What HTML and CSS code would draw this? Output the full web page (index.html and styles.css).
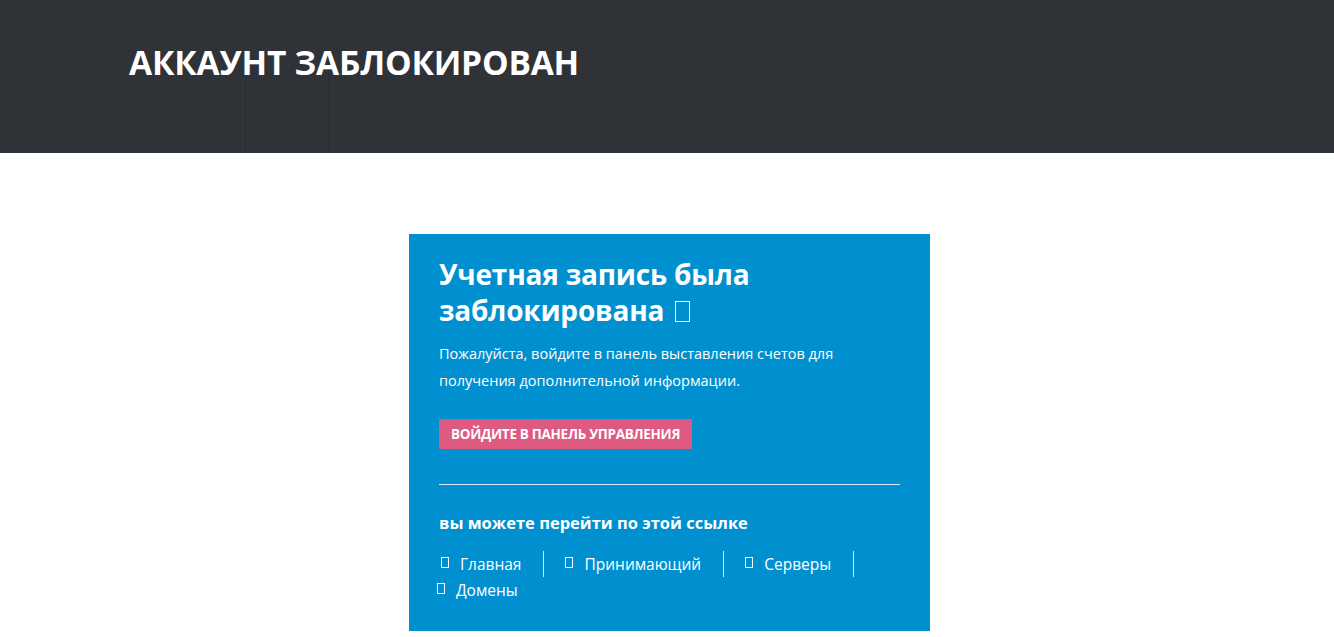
FILE: index.html
```html
<!DOCTYPE html>
<html lang="ru">
<head>
<meta charset="utf-8">
<title>Аккаунт заблокирован</title>
<link rel="stylesheet" href="styles.css">
</head>
<body>
<header class="hero">
  <div class="hero-inner">
    <h1 class="hero-title">АККАУНТ ЗАБЛОКИРОВАН</h1>
    <div class="hero-deco"></div>
  </div>
</header>
<main class="content">
  <section class="card">
    <h2 class="card-title">Учетная запись была заблокирована <span class="tofu tofu-lg"></span></h2>
    <p class="card-text">Пожалуйста, войдите в панель выставления счетов для получения дополнительной информации.</p>
    <a class="btn" href="#">ВОЙДИТЕ В ПАНЕЛЬ УПРАВЛЕНИЯ</a>
    <hr class="divider">
    <h3 class="links-title">вы можете перейти по этой ссылке</h3>
    <ul class="links">
      <li class="link-item"><span class="tofu"></span>Главная</li>
      <li class="link-item"><span class="tofu"></span>Принимающий</li>
      <li class="link-item"><span class="tofu"></span>Серверы</li>
      <li class="link-item last"><span class="tofu"></span>Домены</li>
    </ul>
  </section>
</main>
</body>
</html>
```

FILE: styles.css
```css
* { box-sizing: border-box; }
html, body { margin: 0; padding: 0; }
body {
  font-family: "Open Sans", "Noto Sans", sans-serif;
  background: #ffffff;
  color: #fff;
}
.hero {
  background: #2f3236;
  height: 153px;
}
.hero-inner {
  padding-left: 129px;
  padding-top: 38px;
  position: relative;
  height: 100%;
}
.hero-title {
  position: relative;
  z-index: 1;
  margin: 0;
  font-size: 33.5px;
  font-weight: 700;
  letter-spacing: -0.2px;
  line-height: 48px;
  color: #fff;
}
.hero-deco {
  position: absolute;
  left: 245px;
  top: 58px;
  width: 84px;
  bottom: 0;
  border-left: 1px solid #2a2d30;
  border-right: 1px solid #2a2d30;
  border-top: 1px solid #2c2f33;
  z-index: 0;
}
.content {
  display: flex;
  justify-content: center;
  padding-top: 81px;
}
.card {
  width: 521px;
  height: 397px;
  background: #0090d0;
  padding: 22px 30px 0 30px;
  margin-left: 5px;
}
.card-title {
  margin: 0;
  font-size: 28px;
  line-height: 36px;
  font-weight: 700;
  letter-spacing: -0.2px;
}
.tofu {
  display: inline-block;
  width: 8px;
  height: 11px;
  border: 1px solid #fff;
  vertical-align: 2px;
}
.tofu-lg {
  width: 15px;
  height: 21px;
  margin: 0 0 0 4px;
  vertical-align: -1px;
}
.card-text {
  margin: 12px 0 0 0;
  font-size: 14.5px;
  line-height: 27px;
  width: 440px;
}
.btn {
  display: inline-block;
  margin-top: 25px;
  background: #de5a80;
  color: #fff;
  text-decoration: none;
  font-size: 13.5px;
  font-weight: 700;
  line-height: 30px;
  height: 30px;
  padding: 0 12px;
  letter-spacing: -0.3px;
}
.divider {
  border: 0;
  border-top: 1px solid #d7e9f2;
  margin: 35px 0 0 0;
}
.links-title {
  margin: 24px 0 0 0;
  font-size: 16.5px;
  font-weight: 700;
  line-height: 28px;
}
.links {
  list-style: none;
  margin: 14px 0 0 0;
  padding: 0;
  display: flex;
  flex-wrap: wrap;
  width: 461px;
}
.link-item {
  font-size: 15.5px;
  line-height: 26px;
  padding: 0 22px 0 2px;
  border-right: 1px solid #d7e9f2;
  margin-right: 19px;
}
.link-item .tofu { margin-right: 11px; }
.link-item.last {
  border-right: 0;
  margin-left: -4px;
}
```
